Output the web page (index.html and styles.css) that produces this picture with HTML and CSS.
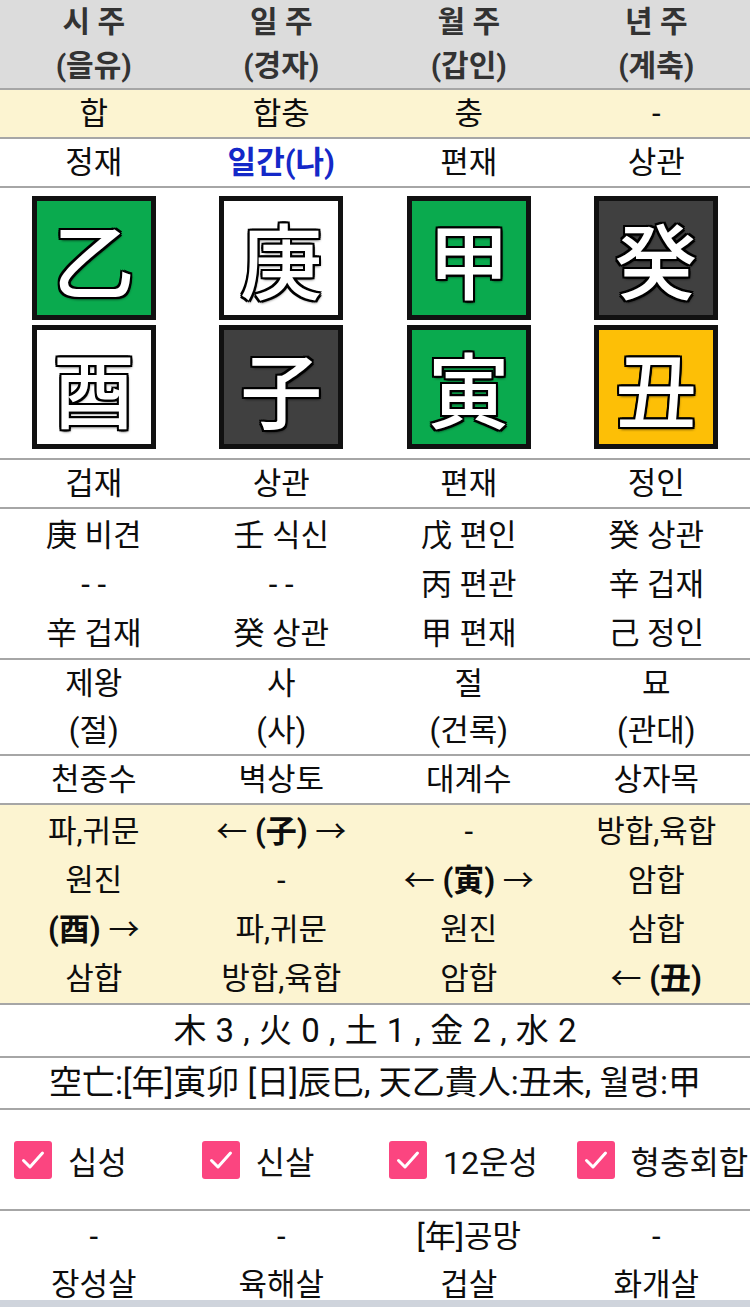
FILE: index.html
```html
<!DOCTYPE html>
<html lang="ko">
<head>
<meta charset="utf-8">
<title>사주</title>
<link rel="stylesheet" href="styles.css">
</head>
<body>
<div class="saju">
  <div class="row head">
    <div class="cell"><div>시 주</div><div>(을유)</div></div>
    <div class="cell"><div>일 주</div><div>(경자)</div></div>
    <div class="cell"><div>월 주</div><div>(갑인)</div></div>
    <div class="cell"><div>년 주</div><div>(계축)</div></div>
  </div>
  <div class="row yel l47">
    <div>합</div><div>합충</div><div>충</div><div>-</div>
  </div>
  <div class="row l47">
    <div>정재</div><div class="me">일간(나)</div><div>편재</div><div>상관</div>
  </div>
  <div class="row boxes">
    <div class="pillar">
      <div class="box green">乙</div>
      <div class="box white">酉</div>
    </div>
    <div class="pillar">
      <div class="box white">庚</div>
      <div class="box dark">子</div>
    </div>
    <div class="pillar">
      <div class="box green">甲</div>
      <div class="box green">寅</div>
    </div>
    <div class="pillar">
      <div class="box dark">癸</div>
      <div class="box gold">丑</div>
    </div>
  </div>
  <div class="row l47">
    <div>겁재</div><div>상관</div><div>편재</div><div>정인</div>
  </div>
  <div class="row jjg">
    <div class="cell"><div>庚 비견</div><div>- -</div><div>辛 겁재</div></div>
    <div class="cell"><div>壬 식신</div><div>- -</div><div>癸 상관</div></div>
    <div class="cell"><div>戊 편인</div><div>丙 편관</div><div>甲 편재</div></div>
    <div class="cell"><div>癸 상관</div><div>辛 겁재</div><div>己 정인</div></div>
  </div>
  <div class="row l47">
    <div class="cell"><div>제왕</div><div>(절)</div></div>
    <div class="cell"><div>사</div><div>(사)</div></div>
    <div class="cell"><div>절</div><div>(건록)</div></div>
    <div class="cell"><div>묘</div><div>(관대)</div></div>
  </div>
  <div class="row l47">
    <div>천중수</div><div>벽상토</div><div>대계수</div><div>상자목</div>
  </div>
  <div class="row yel rel">
    <div class="cell"><div>파,귀문</div><div>원진</div><div><b>(酉)</b> →</div><div>삼합</div></div>
    <div class="cell"><div>← <b>(子)</b> →</div><div>-</div><div>파,귀문</div><div>방합,육합</div></div>
    <div class="cell"><div>-</div><div>← <b>(寅)</b> →</div><div>원진</div><div>암합</div></div>
    <div class="cell"><div>방합,육합</div><div>암합</div><div>삼합</div><div>← <b>(丑)</b></div></div>
  </div>
  <div class="line ohang">木 3 , 火 0 , 土 1 , 金 2 , 水 2</div>
  <div class="line gong">空亡:[年]寅卯 [日]辰巳, 天乙貴人:丑未, 월령:甲</div>
  <div class="row checks">
    <label class="chk"><span class="box-c"><svg viewBox="0 0 38 38" width="38" height="38"><path d="M9.5 19.5 L16 26 L28.5 12" fill="none" stroke="#fff" stroke-width="3" stroke-linecap="round" stroke-linejoin="round"/></svg></span>십성</label>
    <label class="chk"><span class="box-c"><svg viewBox="0 0 38 38" width="38" height="38"><path d="M9.5 19.5 L16 26 L28.5 12" fill="none" stroke="#fff" stroke-width="3" stroke-linecap="round" stroke-linejoin="round"/></svg></span>신살</label>
    <label class="chk"><span class="box-c"><svg viewBox="0 0 38 38" width="38" height="38"><path d="M9.5 19.5 L16 26 L28.5 12" fill="none" stroke="#fff" stroke-width="3" stroke-linecap="round" stroke-linejoin="round"/></svg></span>12운성</label>
    <label class="chk"><span class="box-c"><svg viewBox="0 0 38 38" width="38" height="38"><path d="M9.5 19.5 L16 26 L28.5 12" fill="none" stroke="#fff" stroke-width="3" stroke-linecap="round" stroke-linejoin="round"/></svg></span>형충회합</label>
  </div>
  <div class="row sinsal">
    <div class="cell"><div>-</div><div>장성살</div></div>
    <div class="cell"><div>-</div><div>육해살</div></div>
    <div class="cell"><div>[年]공망</div><div>겁살</div></div>
    <div class="cell"><div>-</div><div>화개살</div></div>
  </div>
</div>
<div class="bottombar"></div>
</body>
</html>
```

FILE: styles.css
```css
html, body {
  margin: 0;
  padding: 0;
}
body {
  font-family: Roboto, "Noto Sans CJK KR", sans-serif;
  font-size: 31px;
  color: #0d0d0d;
  background: #fff;
  overflow: hidden;
}
.saju {
  width: 750px;
}
.row {
  display: grid;
  grid-template-columns: repeat(4, 1fr);
  text-align: center;
  border-bottom: 2px solid #a6a6a6;
}
.head {
  background: #dcdcdc;
  color: #333;
  font-weight: 700;
  font-size: 30px;
  line-height: 44px;
  height: 88px;
}
.yel {
  background: #fcf4d1;
}
.l47 {
  line-height: 47px;
}
.me {
  color: #1428c8;
  font-weight: 700;
}
.boxes {
  padding: 8px 0 9px;
}
.pillar {
  display: flex;
  flex-direction: column;
  align-items: center;
  gap: 5px;
}
.box {
  width: 124px;
  height: 124px;
  box-sizing: border-box;
  border: 5px solid #111;
  display: flex;
  align-items: center;
  justify-content: center;
  font-family: "Noto Sans CJK KR", sans-serif;
  font-size: 82px;
  font-weight: 500;
  line-height: 1;
  color: #fff;
  text-shadow:
    -2px -2px 0 #000, 2px -2px 0 #000, -2px 2px 0 #000, 2px 2px 0 #000,
    0 -2px 0 #000, 0 2px 0 #000, -2px 0 0 #000, 2px 0 0 #000,
    1px 2px 3px #000;
}
.green { background: #0aaa4e; }
.white { background: #fff; }
.dark { background: #404040; }
.gold { background: #fdbf06; }
.jjg {
  line-height: 49px;
  padding: 2px 0 0;
}
.rel {
  line-height: 49px;
  padding-top: 2px;
}
.rel b {
  font-weight: 700;
}
.line {
  text-align: center;
  border-bottom: 2px solid #a6a6a6;
  font-size: 33px;
}
.ohang {
  line-height: 51px;
  word-spacing: 1px;
}
.gong {
  line-height: 50px;
}
.checks {
  height: 99px;
  align-items: center;
  text-align: left;
}
.chk {
  display: flex;
  align-items: center;
  gap: 16px;
  padding-left: 14px;
  font-size: 32px;
  color: #111;
}
.box-c {
  width: 38px;
  height: 38px;
  border-radius: 3px;
  background: #fb4580;
  display: block;
}
.box-c svg {
  display: block;
}
.sinsal {
  border-bottom: none;
  line-height: 48px;
  padding-top: 2px;
}
.bottombar {
  position: fixed;
  left: 0;
  right: 0;
  bottom: 0;
  height: 7px;
  background: #cfd4dc;
}
```
